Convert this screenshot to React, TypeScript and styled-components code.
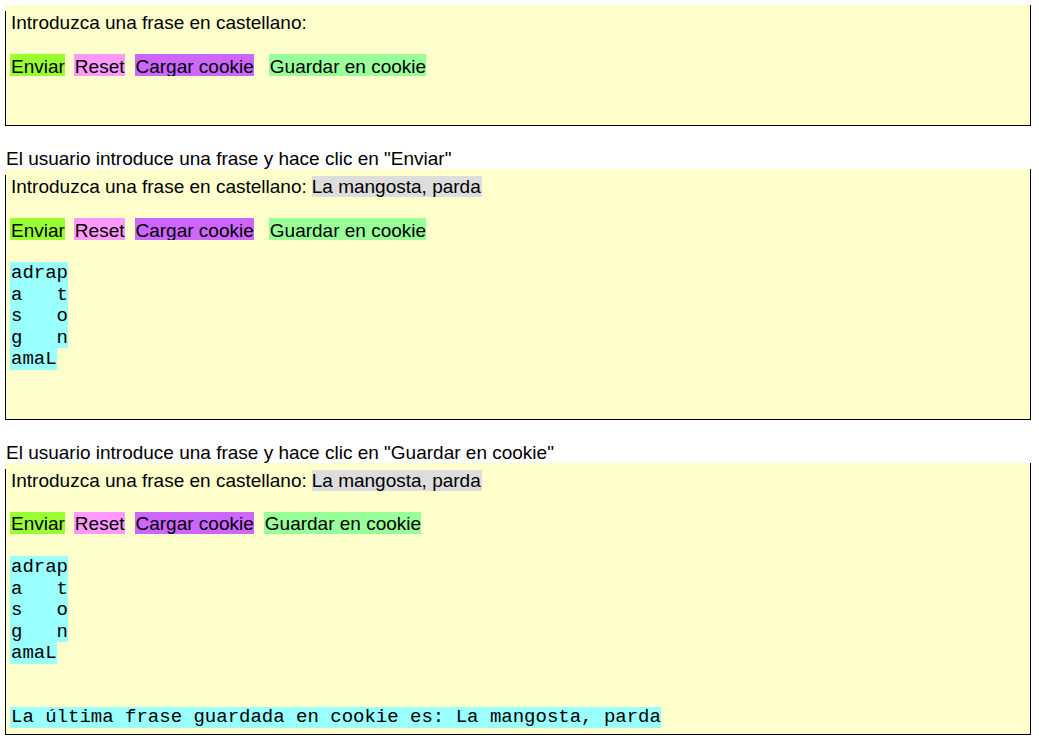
import React, { useId } from "react";
import styled, { createGlobalStyle } from "styled-components";

const GlobalStyle = createGlobalStyle`
  body {
    margin: 0;
    background: #ffffff;
    color: #000000;
    font-family: "Liberation Sans", Arial, sans-serif;
    font-size: 19px;
    line-height: 21px;
  }
`;

const Page = styled.main`
  padding: 5px 8px 10px 5px;
`;

const Caption = styled.p`
  margin: 22px 0 0;
  padding-left: 1px;
`;

/* The left rule starts a little below the top of the panel. */
const Panel = styled.form<{ $bottom: number }>`
  display: flex;
  flex-direction: column;
  align-items: flex-start;
  padding: 7px 5px ${(p) => p.$bottom}px;
  border-right: 1px solid #000000;
  border-bottom: 1px solid #000000;
  background: linear-gradient(#000000, #000000) left bottom / 1px
    calc(100% - 6px) no-repeat #ffffcc;
`;

const Field = styled.div`
  display: flex;
  gap: 5px;
  padding-left: 1px;
`;

const PhraseInput = styled.input<{ $filled: boolean }>`
  width: 170px;
  height: 21px;
  padding: 0;
  border: 0;
  box-sizing: border-box;
  background: ${(p) => (p.$filled ? "#dddddd" : "transparent")};
  color: inherit;
  font: inherit;
  outline: none;
`;

const ActionButton = styled.button<{ $color: string }>`
  height: 22px;
  padding: 2px 0 0 1px;
  border: 0;
  overflow: hidden;
  background: ${(p) => p.$color};
  color: inherit;
  font: inherit;
  white-space: nowrap;
`;

const Actions = styled.div<{ $compact: boolean }>`
  display: flex;
  margin-top: 21px;

  & > ${ActionButton} {
    padding-top: ${(p) => (p.$compact ? 1 : 2)}px;
  }
  & > :nth-child(2) {
    margin-left: 9px;
  }
  & > :nth-child(3) {
    margin-left: 10px;
  }
  & > :nth-child(4) {
    margin-left: ${(p) => (p.$compact ? 10 : 15)}px;
  }
`;

const Spiral = styled.output`
  display: grid;
  grid-template-rows: repeat(5, minmax(0, 1fr));
  justify-items: start;
  height: 108px;
  margin-top: 22px;
  font-family: "Liberation Mono", "Courier New", monospace;
  line-height: 23px;
  white-space: pre;
`;

const SpiralRow = styled.span`
  padding-left: 1px;
  background: #99ffff;
`;

const Saved = styled.p`
  margin: 43px 0 0;
  padding-left: 1px;
  background: #99ffff;
  font-family: "Liberation Mono", "Courier New", monospace;
`;

const spiralRows = ["adrap", "a   t", "s   o", "g   n", "amaL"];

type PhraseFormProps = {
  phrase?: string;
  saved?: boolean;
  bottom: number;
};

function PhraseForm({ phrase = "", saved = false, bottom }: PhraseFormProps) {
  const id = useId();
  return (
    <Panel $bottom={bottom} onSubmit={(e) => e.preventDefault()}>
      <Field>
        <label htmlFor={id}>Introduzca una frase en castellano:</label>
        <PhraseInput
          id={id}
          type="text"
          defaultValue={phrase}
          $filled={phrase !== ""}
          spellCheck={false}
        />
      </Field>
      <Actions $compact={saved}>
        <ActionButton type="submit" $color="#99ff33">Enviar</ActionButton>
        <ActionButton type="reset" $color="#ff99ff">Reset</ActionButton>
        <ActionButton type="button" $color="#cc66ff">Cargar cookie</ActionButton>
        <ActionButton type="button" $color="#99ff99">Guardar en cookie</ActionButton>
      </Actions>
      {phrase && (
        <Spiral>
          {spiralRows.map((row) => (
            <SpiralRow key={row}>{row}</SpiralRow>
          ))}
        </Spiral>
      )}
      {saved && <Saved>La última frase guardada en cookie es: {phrase}</Saved>}
    </Panel>
  );
}

export default function App() {
  return (
    <Page>
      <GlobalStyle />
      <PhraseForm bottom={49} />
      <Caption>El usuario introduce una frase y hace clic en "Enviar"</Caption>
      <PhraseForm phrase="La mangosta, parda" bottom={49} />
      <Caption>El usuario introduce una frase y hace clic en "Guardar en cookie"</Caption>
      <PhraseForm phrase="La mangosta, parda" saved bottom={6} />
    </Page>
  );
}
